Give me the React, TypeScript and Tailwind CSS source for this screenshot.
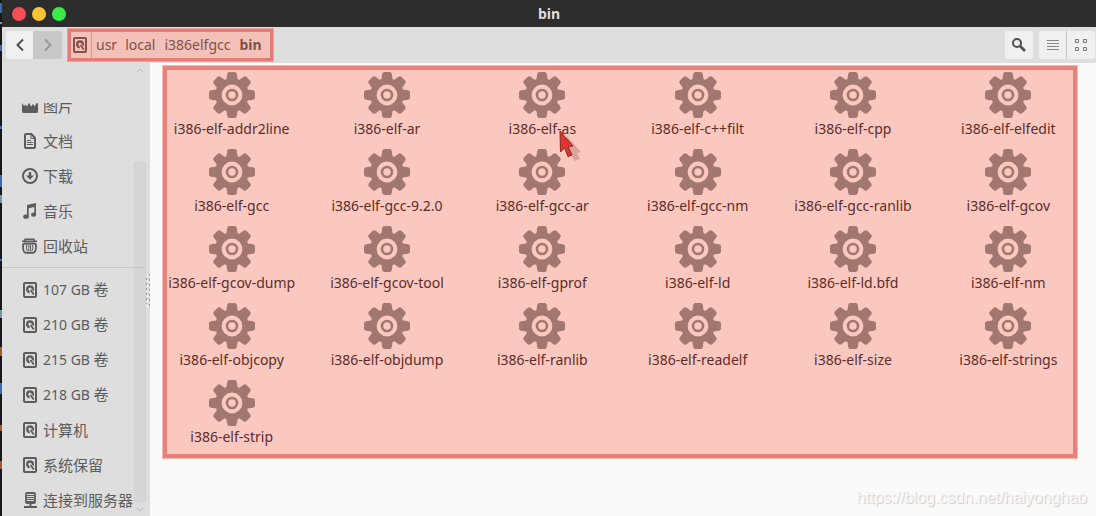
import React from "react";

const files = [
  "i386-elf-addr2line", "i386-elf-ar", "i386-elf-as", "i386-elf-c++filt", "i386-elf-cpp", "i386-elf-elfedit",
  "i386-elf-gcc", "i386-elf-gcc-9.2.0", "i386-elf-gcc-ar", "i386-elf-gcc-nm", "i386-elf-gcc-ranlib", "i386-elf-gcov",
  "i386-elf-gcov-dump", "i386-elf-gcov-tool", "i386-elf-gprof", "i386-elf-ld", "i386-elf-ld.bfd", "i386-elf-nm",
  "i386-elf-objcopy", "i386-elf-objdump", "i386-elf-ranlib", "i386-elf-readelf", "i386-elf-size", "i386-elf-strings",
  "i386-elf-strip",
];

function Gear() {
  return (
    <svg viewBox="0 0 46 46" className="h-[46px] w-[46px]" fill="#a17770" aria-hidden="true">
      {[0, 45, 90, 135].map((a) => (
        <path
          key={a}
          transform={`rotate(${a} 23 23)`}
          d="M20.5 0h5q2 0 2.3 2l1 7h-11.6l1-7q.3-2 2.3-2zM20.5 46h5q2 0 2.3-2l1-7h-11.6l1 7q.3 2 2.3 2z"
        />
      ))}
      <circle cx="23" cy="23" r="13.6" fill="none" stroke="#a17770" strokeWidth="6.4" />
      <circle cx="23" cy="23" r="5" fill="none" stroke="#a17770" strokeWidth="2.6" />
    </svg>
  );
}

function DiskIcon() {
  return (
    <svg viewBox="0 0 16 16" className="h-4 w-4 shrink-0" aria-hidden="true">
      <rect x="2" y="1" width="12" height="14" rx="1" fill="none" stroke="currentColor" strokeWidth="2" />
      <path d="M8 3.2a4 4 0 0 1 4 4v2L9.8 7.4A1.7 1.7 0 1 0 7.2 8.8l.9 2.4A4 4 0 0 1 8 3.2z" fill="currentColor" />
      <path d="M8.6 8l3.2 4.6" stroke="currentColor" strokeWidth="1.8" />
    </svg>
  );
}

function PictureIcon() {
  return (
    <svg viewBox="0 0 16 16" className="h-4 w-4 shrink-0" fill="currentColor" aria-hidden="true">
      <path d="M0 5l2 3 1.500-1.500L5 8.500l2-4 2 4L11 6l2 2.500 1-3 2-.5v8.500q0 1.500-1.500 1.500h-13Q0 15 0 13.500z" />
    </svg>
  );
}

function DocIcon() {
  return (
    <svg viewBox="0 0 16 16" className="h-4 w-4 shrink-0" fill="none" stroke="currentColor" aria-hidden="true">
      <path d="M4 1h5.500L13 5v9q0 1-1 1H4q-1 0-1-1V2q0-1 1-1z" strokeWidth="2" />
      <path d="M9 1v4.500h4" strokeWidth="1" />
      <path d="M5 7.500h4M5 9.500h6M5 11.500h6" strokeWidth="1" />
    </svg>
  );
}

function DownloadIcon() {
  return (
    <svg viewBox="0 0 16 16" className="h-4 w-4 shrink-0" aria-hidden="true">
      <circle cx="8" cy="8" r="7" fill="none" stroke="currentColor" strokeWidth="2" />
      <path d="M6.800 4h2.400v3.500H12L8 11.800 4 7.500h2.800z" fill="currentColor" />
    </svg>
  );
}

function MusicIcon() {
  return (
    <svg viewBox="0 0 16 16" className="h-4 w-4 shrink-0" fill="currentColor" aria-hidden="true">
      <path d="M5 2l9-2v11.500h-1.700V4L6.700 5.300V13.500H5z" />
      <ellipse cx="4" cy="13.700" rx="2.800" ry="2.100" />
      <ellipse cx="11.600" cy="11.700" rx="2.600" ry="2.100" />
    </svg>
  );
}

function TrashIcon() {
  return (
    <svg viewBox="0 0 16 16" className="h-4 w-4 shrink-0" fill="none" stroke="currentColor" aria-hidden="true">
      <path d="M3 2.500V1.200h9V2.500M0 3.300h15" strokeWidth="1.500" />
      <path d="M2.500 5.500h10q1.500 0 1.500 2.500 0 6.800-3 6.800H4q-3 0-3-6.800 0-2.500 1.500-2.500z" strokeWidth="1.800" />
      <path d="M4.700 6.500q-1 3.500.8 7M6.800 6.500v7M8.600 6.500v7M10.600 6.500q1 3.500-.8 7" strokeWidth="1" />
    </svg>
  );
}

function ServerIcon() {
  return (
    <svg viewBox="0 0 16 16" className="h-4 w-4 shrink-0" fill="none" stroke="currentColor" aria-hidden="true">
      <rect x="4" y="1" width="9" height="10" rx="1" strokeWidth="1.800" />
      <path d="M5 3.500h7M5 5.500h7M5 7.500h7M5 9.500h7" strokeWidth="1" />
      <path d="M8.500 11v4M2 15h13" strokeWidth="1.900" />
    </svg>
  );
}

type Place = { latin?: string; name: string; Icon: () => React.JSX.Element };

const places: Place[] = [
  { name: "文档", Icon: DocIcon },
  { name: "下载", Icon: DownloadIcon },
  { name: "音乐", Icon: MusicIcon },
  { name: "回收站", Icon: TrashIcon },
];
const devices: Place[] = [
  { latin: "107 GB ", name: "卷", Icon: DiskIcon },
  { latin: "210 GB ", name: "卷", Icon: DiskIcon },
  { latin: "215 GB ", name: "卷", Icon: DiskIcon },
  { latin: "218 GB ", name: "卷", Icon: DiskIcon },
  { name: "计算机", Icon: DiskIcon },
  { name: "系统保留", Icon: DiskIcon },
  { name: "连接到服务器", Icon: ServerIcon },
];

function PlaceList({ items }: { items: Place[] }) {
  return (
    <ul>
      {items.map(({ latin, name, Icon }) => (
        <li key={(latin ?? "") + name}>
          <a href="#" className="flex h-[35px] items-center gap-[5px] whitespace-nowrap pl-5">
            <Icon />
            <span className="text-[15px] leading-5">
              {latin && <span className="text-sm leading-5">{latin}</span>}
              {name}
            </span>
          </a>
        </li>
      ))}
    </ul>
  );
}

export default function App() {
  return (
    <div className="flex h-screen overflow-hidden bg-[#17171c] font-['Noto_Sans','Noto_Sans_CJK_SC',sans-serif] text-[#5c5c5c]">
      <svg viewBox="0 0 2 516" className="h-[516px] w-[2px] shrink-0" aria-hidden="true">
        <path d="M1 3v10M1 45v6M1 126v3M1 175v12M1 259v2M1 383v11" stroke="#3b6cb0" strokeWidth="2" />
        <path d="M1 22v2M1 195v8M1 310v8" stroke="#6d9aa8" strokeWidth="2" />
        <path d="M1 347v9M1 425v6M1 461v8" stroke="#a4592c" strokeWidth="2" />
      </svg>
      <div className="flex min-w-0 flex-1 flex-col bg-[#dedede]">
        <header className="flex h-[27px] shrink-0 items-center bg-[#2d2d2d] px-[10px]">
          <div className="flex flex-1 gap-[6px]">
            <button aria-label="Close" className="h-[14px] w-[14px] rounded-full bg-[#f64f57]" />
            <button aria-label="Minimize" className="h-[14px] w-[14px] rounded-full bg-[#fbc436]" />
            <button aria-label="Maximize" className="h-[14px] w-[14px] rounded-full bg-[#39ea49]" />
          </div>
          <h1 className="text-sm font-bold leading-5 text-[#dfdfdf]">bin</h1>
          <div className="flex-1" />
        </header>

        <div className="flex h-9 shrink-0 items-center pl-1 pr-px">
          <div className="flex h-7 w-14 shrink-0 overflow-hidden rounded-[2px]">
            <button aria-label="Back" className="flex w-[27px] items-center justify-center bg-[#f0f0f0]">
              <svg viewBox="0 0 10 14" className="h-[14px] w-[10px]" fill="none" stroke="#505050" strokeWidth="2"><path d="M8 1.500L2.500 7 8 12.500" /></svg>
            </button>
            <button aria-label="Forward" className="flex flex-1 items-center justify-center bg-[#c8c8c8]">
              <svg viewBox="0 0 10 14" className="h-[14px] w-[10px]" fill="none" stroke="#999" strokeWidth="2"><path d="M2 1.500L7.500 7 2 12.500" /></svg>
            </button>
          </div>
          <nav aria-label="Path" className="ml-[5px] h-[34px] border border-[#e9a19b] bg-[#f4c1b8] text-sm leading-5 text-[#80504a]">
            <div className="flex h-full items-center border-[3px] border-[#e37c76] pr-2">
              <a href="#" aria-label="Root" className="flex h-full items-center border-r border-[#cf9a92] pl-px pr-[3px]"><DiskIcon /></a>
              <a href="#" className="ml-1">usr</a>
              <a href="#" className="ml-2">local</a>
              <a href="#" className="ml-[9px]">i386elfgcc</a>
              <a href="#" className="ml-[9px] font-bold">bin</a>
            </div>
          </nav>
          <div className="flex-1" />
          <button aria-label="Search" className="mr-[6px] flex h-7 w-7 items-center justify-center rounded-[2px] bg-[#f0f0f0]">
            <svg viewBox="0 0 14 14" className="h-[14px] w-[14px]" fill="none" stroke="#505050"><circle cx="5" cy="5" r="4" strokeWidth="2" /><path d="M8 8l5 5" strokeWidth="2.600" /></svg>
          </button>
          <div className="flex h-7 gap-px overflow-hidden rounded-[2px] bg-[#c4c4c4]">
            <button aria-label="List view" className="flex w-[27px] items-center justify-center bg-[#f0f0f0]">
              <svg viewBox="0 0 12 12" className="h-3 w-3" stroke="#858585"><path d="M0 1.500h12M0 4.500h12M0 7.500h12M0 10.500h12" /></svg>
            </button>
            <button aria-label="Icon view" className="flex w-7 items-center justify-center bg-[#f0f0f0]">
              <svg viewBox="0 0 12 12" className="h-3 w-3" fill="none" stroke="#777"><path d="M.5.5h3v3h-3zM8.500.5h3v3h-3zM.5 8.500h3v3h-3zM8.500 8.500h3v3h-3z" /></svg>
            </button>
          </div>
        </div>

        <div className="flex min-h-0 flex-1">
          <aside className="relative w-[148px] shrink-0 overflow-hidden pt-10">
            <div className="flex h-5 items-end overflow-hidden">
              <a href="#" className="flex h-[35px] shrink-0 items-center gap-[5px] pl-5">
                <PictureIcon />
                <span className="text-[15px] leading-5">图片</span>
              </a>
            </div>
            <PlaceList items={places} />
            <hr className="my-1 mr-1 border-[#c6c6c6]" />
            <PlaceList items={devices} />
            <div className="absolute bottom-[14px] right-1 top-[99px] w-3 border border-[#d1d1d1] bg-[#bbbbbb]/20" />
            <svg viewBox="0 0 8 5" className="absolute right-[6px] top-[5px] h-[5px] w-2" fill="none" stroke="#bdbdbd"><path d="M1 4l3-3 3 3" /></svg>
            <svg viewBox="0 0 8 5" className="absolute bottom-1 right-[6px] h-[5px] w-2" fill="none" stroke="#b5b5b5"><path d="M1 1l3 3 3-3" /></svg>
            <svg viewBox="0 0 4 34" className="absolute right-0 top-[211px] h-[34px] w-1" strokeDasharray="2 3"><path d="M.5 4v26M3.500 0v34" stroke="#999" /><path d="M1.500 1v32" stroke="#fff" /></svg>
          </aside>

          <main className="relative min-w-0 flex-1 bg-[#fafafa] pl-1 pr-[10px] pt-[9px]">
            <div className="absolute left-3 right-[18px] top-[2px] h-[394px] border border-[#f5b9b4] bg-[#fac8bf]">
              <div className="h-full border-4 border-[#e9817b]" />
            </div>
            <ul className="relative grid grid-cols-6">
              {files.map((name) => (
                <li key={name} className="flex h-[77px] flex-col items-center gap-px">
                  <Gear />
                  <span className="whitespace-nowrap text-sm leading-5 text-[#5d2d2a]">{name}</span>
                </li>
              ))}
            </ul>
            <svg viewBox="0 0 24 32" className="absolute left-[408px] top-[67px] h-8 w-6" aria-hidden="true">
              <path d="M9 6l14 16-4 1 3 6-5 2-4-6-4 2z" fill="#b98780" opacity=".55" />
              <path d="M2 1l13 15-5 .5 4 8.500-4 1.500L6.500 18 2.500 22z" fill="#de352e" stroke="#8b2622" />
            </svg>
            <p className="absolute bottom-2 right-[9px] font-['Liberation_Sans',sans-serif] text-base leading-5 text-[#f8f8f8] [text-shadow:1px_1px_1px_#c8c8c8]">https://blog.csdn.net/haiyonghao</p>
          </main>
        </div>
      </div>
    </div>
  );
}
